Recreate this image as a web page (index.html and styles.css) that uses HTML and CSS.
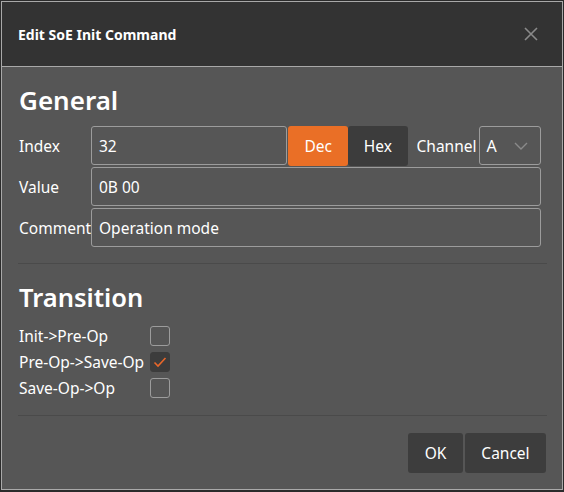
FILE: index.html
```html
<!DOCTYPE html>
<html lang="en">
<head>
    <meta charset="UTF-8">
    <meta name="viewport" content="width=device-width, initial-scale=1.0">
    <title>Edit SoE Init Command</title>
    <link rel="stylesheet" href="styles.css">
</head>
<body>
    <div class="dialog">
        <div class="kepala">
            <span class="judul">Edit SoE Init Command</span>
            <svg class="tutup" width="14" height="14" viewBox="0 0 14 14">
                <path d="M1 1 L13 13 M13 1 L1 13" stroke="#8a8a8a" stroke-width="1.6" fill="none"/>
            </svg>
        </div>
        <div class="isi">
            <h2>General</h2>
            <div class="baris">
                <label class="label">Index</label>
                <div class="input pendek">32</div>
                <button class="tombol dec">Dec</button>
                <button class="tombol hex">Hex</button>
                <span class="channel">Channel</span>
                <div class="pilih">
                    <span>A</span>
                    <svg width="14" height="8" viewBox="0 0 14 8">
                        <path d="M1 1 L7 7 L13 1" stroke="#8a8a8a" stroke-width="1.4" fill="none"/>
                    </svg>
                </div>
            </div>
            <div class="baris">
                <label class="label">Value</label>
                <div class="input">0B 00</div>
            </div>
            <div class="baris">
                <label class="label">Comment</label>
                <div class="input">Operation mode</div>
            </div>
            <div class="garis"></div>
            <h2 class="h2-kedua">Transition</h2>
            <div class="cek-list">
                <div class="cek-baris">
                    <span class="cek-label">Init-&gt;Pre-Op</span>
                    <span class="kotak"></span>
                </div>
                <div class="cek-baris">
                    <span class="cek-label">Pre-Op-&gt;Save-Op</span>
                    <span class="kotak aktif">
                        <svg width="14" height="12" viewBox="0 0 14 12">
                            <path d="M1.5 6.5 L5 10 L12.5 2" stroke="#e9672a" stroke-width="1.6" fill="none"/>
                        </svg>
                    </span>
                </div>
                <div class="cek-baris">
                    <span class="cek-label">Save-Op-&gt;Op</span>
                    <span class="kotak"></span>
                </div>
            </div>
            <div class="garis garis-bawah"></div>
            <div class="bawah">
                <button class="tombol biasa ok">OK</button>
                <button class="tombol biasa">Cancel</button>
            </div>
        </div>
    </div>
</body>
</html>
```

FILE: styles.css
```css
body {
    margin: 0;
    background-color: #2b2b2b;
    font-family: "Noto Sans", "Open Sans", sans-serif;
    color: #fff;
}
.dialog {
    margin: 1px 0 0 1px;
    width: 560px;
    height: 487px;
    border: 1px solid #a9a9a9;
    background-color: #565656;
    display: flex;
    flex-direction: column;
}
.kepala {
    height: 64px;
    flex-shrink: 0;
    background-color: #333;
    border-bottom: 1px solid #a9a9a9;
    display: flex;
    align-items: center;
    justify-content: space-between;
    padding: 0 24px 0 16px;
}
.judul {
    font-size: 14px;
    font-weight: 700;
}
.isi {
    padding: 0 15px 0 16px;
}
h2 {
    font-size: 26px;
    font-weight: 600;
    line-height: 34px;
    margin: 16px 0 9px 1px;
}
.h2-kedua {
    font-size: 25.5px;
    margin-top: 16px;
}
.baris {
    display: flex;
    align-items: center;
    height: 39px;
    margin: 0 6px 2px 1px;
    font-size: 15.5px;
}
.label {
    width: 72px;
    flex-shrink: 0;
}
.input {
    flex: 1;
    height: 37px;
    border: 1px solid #9c9c9c;
    border-radius: 3px;
    display: flex;
    align-items: center;
    padding-left: 7px;
}
.input.pendek {
    flex: none;
    width: 187px;
}
.tombol {
    border: none;
    border-radius: 3px;
    color: #fff;
    font-family: inherit;
    font-size: 15.5px;
    height: 40px;
    padding: 0;
}
.dec {
    width: 61px;
    margin-left: 1px;
    background-color: #ea6f26;
}
.hex {
    width: 60px;
    background-color: #3c3c3c;
}
.channel {
    margin-left: 9px;
}
.pilih {
    margin-left: 2px;
    width: 63px;
    border: 1px solid #9c9c9c;
    border-radius: 3px;
    display: flex;
    align-items: center;
    justify-content: space-between;
    padding: 0 12px 0 7px;
    box-sizing: border-box;
    height: 39px;
    font-size: 16px;
}
.garis {
    border-top: 1px solid #4a4a4a;
    margin-top: 16px;
}
.cek-list {
    margin: 9px 0 0 1px;
    font-size: 15.5px;
}
.cek-baris {
    display: flex;
    align-items: center;
    height: 26px;
}
.cek-label {
    width: 131px;
}
.kotak {
    width: 18px;
    height: 18px;
    border: 1px solid #9c9c9c;
    border-radius: 3px;
    display: flex;
    align-items: center;
    justify-content: center;
}
.kotak.aktif {
    background-color: #3c3c3c;
    border-color: #3c3c3c;
}
.garis-bawah {
    margin-top: 14px;
}
.bawah {
    display: flex;
    justify-content: flex-end;
    gap: 2px;
    margin: 17px 1px 0 0;
}
.biasa {
    background-color: #3d3d3d;
    width: 81px;
}
.biasa.ok {
    width: 55px;
}
```
